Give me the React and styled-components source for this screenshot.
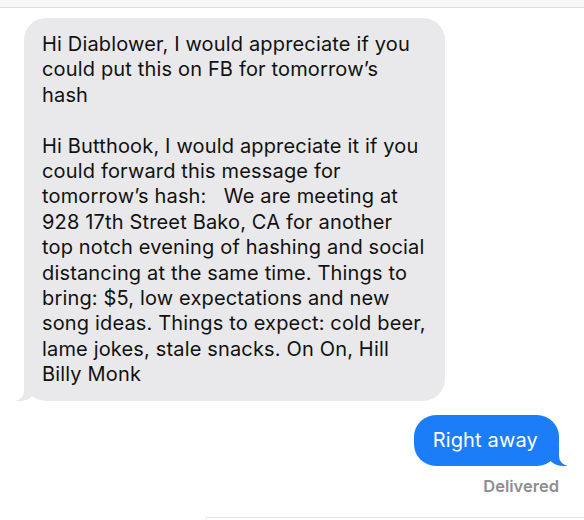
import React from "react";
import styled, { createGlobalStyle } from "styled-components";

const Global = createGlobalStyle`
  html, body { margin: 0; padding: 0; background: #ffffff; }
  body { font-family: Inter, "Liberation Sans", Arial, sans-serif; -webkit-font-smoothing: antialiased; }
`;

const Screen = styled.div`
  width: 584px;
  height: 520px;
  overflow: hidden;
  display: flex;
  flex-direction: column;
  background: #fff;
`;

const TopBar = styled.div`
  height: 7px;
  background: #f7f7f7;
  border-bottom: 1px solid #dedede;
  flex: none;
`;

const Thread = styled.div`
  flex: 1;
  display: flex;
  flex-direction: column;
  padding-top: 10px;
`;

const Bubble = styled.div`
  position: relative;
  font-size: 20px;
  letter-spacing: 0.16px;
  line-height: 25.4px;
  white-space: pre-wrap;
  border-radius: 22px;
  background: ${(p) => (p.$mine ? "#1b7df8" : "#e9e9eb")};
  color: ${(p) => (p.$mine ? "#ffffff" : "#111111")};
  align-self: ${(p) => (p.$mine ? "flex-end" : "flex-start")};
  margin: ${(p) => (p.$mine ? "14px 25px 0 0" : "0 0 0 24px")};
  padding: ${(p) => (p.$mine ? "13px 21px 13px 19px" : "14px 8px 13px 18px")};
  width: ${(p) => p.$width || "auto"};
  box-sizing: border-box;

  &::before {
    content: "";
    position: absolute;
    bottom: 0;
    height: 20px;
    width: 20px;
    background: inherit;
    ${(p) =>
      p.$mine
        ? "right: -8px; border-bottom-left-radius: 16px 14px;"
        : "left: -8px; border-bottom-right-radius: 16px 14px;"}
  }
  &::after {
    content: "";
    position: absolute;
    bottom: 0;
    height: 20px;
    width: 26px;
    background: #ffffff;
    ${(p) =>
      p.$mine
        ? "right: -26px; border-bottom-left-radius: 10px;"
        : "left: -26px; border-bottom-right-radius: 10px;"}
  }
`;

const Status = styled.div`
  align-self: flex-end;
  margin: 11px 25px 0 0;
  font-size: 16.5px;
  font-weight: 600;
  color: #8e8e93;
  line-height: 18px;
`;

const InputEdge = styled.div`
  margin-top: auto;
  margin-left: 205px;
  height: 2px;
  border-top: 1px solid #e2e2e2;
  border-left: 1px solid #eeeeee;
  border-radius: 2px 0 0 0;
`;

const theirText = `Hi Diablower, I would appreciate if you
could put this on FB for tomorrow’s
hash

Hi Butthook, I would appreciate it if you
could forward this message for
tomorrow’s hash:   We are meeting at
928 17th Street Bako, CA for another
top notch evening of hashing and social
distancing at the same time. Things to
bring: $5, low expectations and new
song ideas. Things to expect: cold beer,
lame jokes, stale snacks. On On, Hill
Billy Monk`;

export default function App() {
  return (
    <>
      <Global />
      <Screen>
        <TopBar />
        <Thread>
          <Bubble $width="421px">{theirText}</Bubble>
          <Bubble $mine>Right away</Bubble>
          <Status>Delivered</Status>
          <InputEdge />
        </Thread>
      </Screen>
    </>
  );
}
